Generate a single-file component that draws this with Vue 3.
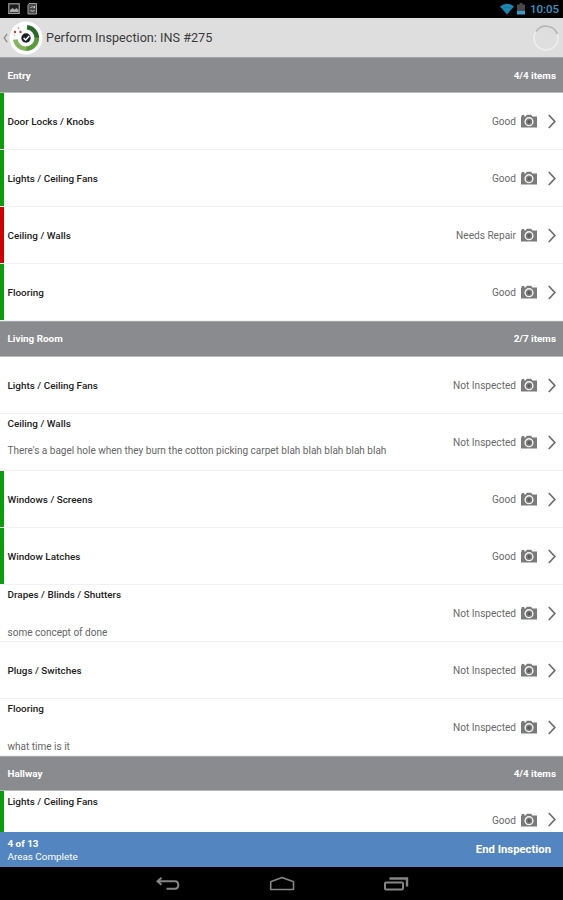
<template>
  <div class="screen">
    <div class="status-bar">
      <svg class="status-left" width="32" height="14" viewBox="0 0 32 14">
        <rect x="0.8" y="1.8" width="10.4" height="9.6" fill="#1c1c1c" stroke="#a0a0a0" stroke-width="1.2" />
        <path d="M2 10V8l2.500-2 2 1.500L8.500 6 10.500 8v2z" fill="#a8a8a8" />
        <path d="M21 1.500h7.500v10.500h-8.500V3z" fill="#4a4a4a" stroke="#a0a0a0" />
        <path d="M22.500 6a2.200 2.200 0 0 1 4 0M26.500 8a2.200 2.200 0 0 1-4 0M26.500 4v2" fill="none" stroke="#c4c4c4" />
      </svg>
      <div class="status-right">
        <svg width="14" height="12" viewBox="0 0 14 12">
          <path d="M0 3.500Q7-2 14 3.500L7 11.500z" fill="#1c87b5" />
          <path d="M2.500 5.500Q7 2.500 11.500 5.500" fill="none" stroke="#146a8e" stroke-width="0.6" />
        </svg>
        <svg class="battery" width="8" height="12" viewBox="0 0 8 12">
          <path d="M2.500 0h3v1.500H8V8H0V1.500h2.500z" fill="#484848" />
          <path d="M0 8h8v3.500H0z" fill="#2f9fce" />
        </svg>
        <span class="clock">10:05</span>
      </div>
    </div>

    <header class="title-bar">
      <svg class="up" width="5" height="10" viewBox="0 0 5 10">
        <path d="M4.200 0.800L1.200 5l3 4.200" fill="none" stroke="#8d8d8d" stroke-width="1.300" />
      </svg>
      <svg class="logo" width="34" height="34" viewBox="0 0 34 34">
        <circle cx="17" cy="17" r="16.500" fill="#fff" />
        <path d="M18 6.300A10.800 10.800 0 0 1 27.800 17" fill="none" stroke="#276b26" stroke-width="4.600" />
        <path d="M27.800 16.500A10.800 10.800 0 0 1 17 27.800" fill="none" stroke="#5b9a3c" stroke-width="4.600" />
        <path d="M17.500 27.800A10.800 10.800 0 0 1 6.300 18.500" fill="none" stroke="#84b55d" stroke-width="4.600" />
        <g fill="#d2392b">
          <circle cx="6" cy="11" r="1.200" />
          <circle cx="11.500" cy="11" r="1.200" />
          <circle cx="9.500" cy="7" r="0.900" opacity="0.500" />
          <circle cx="5.500" cy="14.500" r="0.700" opacity="0.300" />
        </g>
        <circle cx="17" cy="17" r="4.700" fill="#182129" />
        <path d="M14.600 17l2 2 3.600-4" fill="none" stroke="#fff" stroke-width="1.500" />
      </svg>
      <h1>Perform Inspection: INS #275</h1>
      <svg class="spinner" width="28" height="28" viewBox="0 0 28 28">
        <circle cx="14" cy="14" r="12" fill="none" stroke="#ececec" stroke-width="1.800" />
        <path d="M4 7.500A12 12 0 0 1 25.300 10" fill="none" stroke="#b4b4b4" stroke-width="1.600" />
      </svg>
    </header>

    <main class="areas">
      <section v-for="area in areas" :key="area.name">
        <div class="area-head">
          <span>{{ area.name }}</span>
          <span>{{ area.count }}</span>
        </div>
        <div
          v-for="item in area.items"
          :key="item.name"
          class="item"
          :class="[statusClass(item.status), { top: item.top }]"
        >
          <div class="item-text">
            <div class="item-name">{{ item.name }}</div>
            <div v-if="item.note" class="item-note" :class="{ low: item.low }">{{ item.note }}</div>
          </div>
          <span class="item-status">{{ item.status }}</span>
          <svg class="camera" width="16" height="14" viewBox="0 0 16 14">
            <path d="M0 2.500h0.700V1h2.600v1.500h1.400L5.800 0.800h4.400l1.100 1.700H16v11H0z" fill="#7a7a7a" />
            <circle cx="8" cy="7.700" r="3.900" fill="#7a7a7a" stroke="#f4f4f4" stroke-width="1.400" />
            <circle cx="8" cy="7.700" r="1.500" fill="#555" />
          </svg>
          <svg class="chevron" width="8" height="15" viewBox="0 0 8 15">
            <path d="M0.800 1L6.800 7.500 0.800 14" fill="none" stroke="#707070" stroke-width="1.800" />
          </svg>
        </div>
      </section>
    </main>

    <footer class="summary">
      <div>
        <div class="done">4 of 13</div>
        <div class="done-label">Areas Complete</div>
      </div>
      <button class="end">End Inspection</button>
    </footer>

    <nav class="nav-bar">
      <svg width="26" height="16" viewBox="0 0 26 16">
        <path d="M6.500 1.800L2.500 5.300l4 3.500M3 5.300H20q3.300 0 3.300 3.700T20 12.700h-8.500" fill="none" stroke="#858585" stroke-width="2" />
      </svg>
      <svg width="26" height="16" viewBox="0 0 26 16">
        <path d="M13 1.500L1.700 5.800v7.700h22.800V5.800z" fill="none" stroke="#858585" stroke-width="1.600" stroke-linejoin="round" />
      </svg>
      <svg width="26" height="16" viewBox="0 0 26 16">
        <rect x="2" y="6.500" width="18" height="7" rx="1" fill="none" stroke="#858585" stroke-width="2" />
        <path d="M6.500 2.500h17.500v8" fill="none" stroke="#858585" stroke-width="2.400" />
      </svg>
    </nav>
  </div>
</template>

<script setup>
const areas = [
  {
    name: 'Entry',
    count: '4/4 items',
    items: [
      { name: 'Door Locks / Knobs', status: 'Good' },
      { name: 'Lights / Ceiling Fans', status: 'Good' },
      { name: 'Ceiling / Walls', status: 'Needs Repair' },
      { name: 'Flooring', status: 'Good' }
    ]
  },
  {
    name: 'Living Room',
    count: '2/7 items',
    items: [
      { name: 'Lights / Ceiling Fans', status: 'Not Inspected' },
      {
        name: 'Ceiling / Walls',
        status: 'Not Inspected',
        top: true,
        note: "There's a bagel hole when they burn the cotton picking carpet blah blah blah blah blah"
      },
      { name: 'Windows / Screens', status: 'Good' },
      { name: 'Window Latches', status: 'Good' },
      { name: 'Drapes / Blinds / Shutters', status: 'Not Inspected', top: true, low: true, note: 'some concept of done' },
      { name: 'Plugs / Switches', status: 'Not Inspected' },
      { name: 'Flooring', status: 'Not Inspected', top: true, low: true, note: 'what time is it' }
    ]
  },
  {
    name: 'Hallway',
    count: '4/4 items',
    items: [{ name: 'Lights / Ceiling Fans', status: 'Good', top: true }]
  }
]

function statusClass(status) {
  if (status === 'Good') return 'good'
  if (status === 'Needs Repair') return 'repair'
  return ''
}
</script>

<style>
body {
  margin: 0;
}
</style>

<style scoped>
.screen {
  display: flex;
  flex-direction: column;
  width: 563px;
  height: 900px;
  overflow: hidden;
  background: #fff;
  font-family: Roboto, "Liberation Sans", sans-serif;
}
.status-bar {
  display: flex;
  flex: none;
  align-items: center;
  justify-content: space-between;
  height: 18px;
  padding: 0 4px 0 8px;
  background: #000;
}
.status-right {
  display: flex;
  align-items: center;
}
.battery {
  margin: 0 5px 0 3px;
}
.clock {
  color: #2d9bc8;
  font-size: 11.6px;
  font-weight: 500;
  line-height: 18px;
  letter-spacing: -0.1px;
}
.title-bar {
  display: flex;
  flex: none;
  align-items: center;
  height: 39.4px;
  padding: 0 3px;
  background: #dedede;
}
.logo {
  margin-left: 1px;
}
h1 {
  flex: 1;
  margin: 0 0 0 3px;
  color: #3c3c3c;
  font-size: 12.65px;
  font-weight: 400;
}
.areas {
  flex: 1;
  min-height: 0;
  overflow: hidden;
}
.area-head {
  box-sizing: border-box;
  display: flex;
  align-items: center;
  justify-content: space-between;
  height: 35.6px;
  padding: 0 7px 0 7.5px;
  border-top: 1px solid #a4a5a7;
  border-bottom: 1px solid #b9babc;
  background: #8a8b8e;
  color: #fff;
  font-size: 9.9px;
  font-weight: 700;
}
.item {
  display: flex;
  align-items: center;
  height: 56px;
  padding-right: 7px;
  border-bottom: 1px solid #f1f1f1;
}
/* status stripe, interrupted by the row divider */
.item::before {
  width: 4px;
  height: 56px;
  margin-right: 3.5px;
  content: "";
}
.item.good::before {
  background: #0a9e0a;
}
.item.repair::before {
  background: #d20000;
}
.item-text {
  flex: 1;
  padding-top: 2px;
}
.item.top .item-text {
  align-self: flex-start;
  padding-top: 3.4px;
}
.item-name {
  color: #222;
  font-size: 9.92px;
  font-weight: 500;
  line-height: 13px;
}
.item-note {
  margin-top: 14px;
  color: #666;
  font-size: 10.02px;
  line-height: 13px;
}
.item-note.low {
  margin-top: 25px;
}
.item-status {
  padding-top: 2px;
  color: #6a6a6a;
  font-size: 10.1px;
}
.camera {
  margin: 1px 11px 0 5px;
}
.chevron {
  margin-top: 1px;
}
.summary {
  display: flex;
  flex: none;
  align-items: center;
  justify-content: space-between;
  height: 35px;
  padding: 0 12px 0 7.5px;
  background: #5386c1;
  color: #fff;
}
.done,
.done-label {
  font-size: 9.9px;
  line-height: 13px;
}
.done {
  font-weight: 700;
}
.end {
  padding: 0;
  border: 0;
  background: none;
  color: #fff;
  font: 700 11.3px Roboto, "Liberation Sans", sans-serif;
}
.nav-bar {
  display: flex;
  flex: none;
  align-items: center;
  justify-content: center;
  gap: 88px;
  height: 33px;
  background: #000;
}
</style>
